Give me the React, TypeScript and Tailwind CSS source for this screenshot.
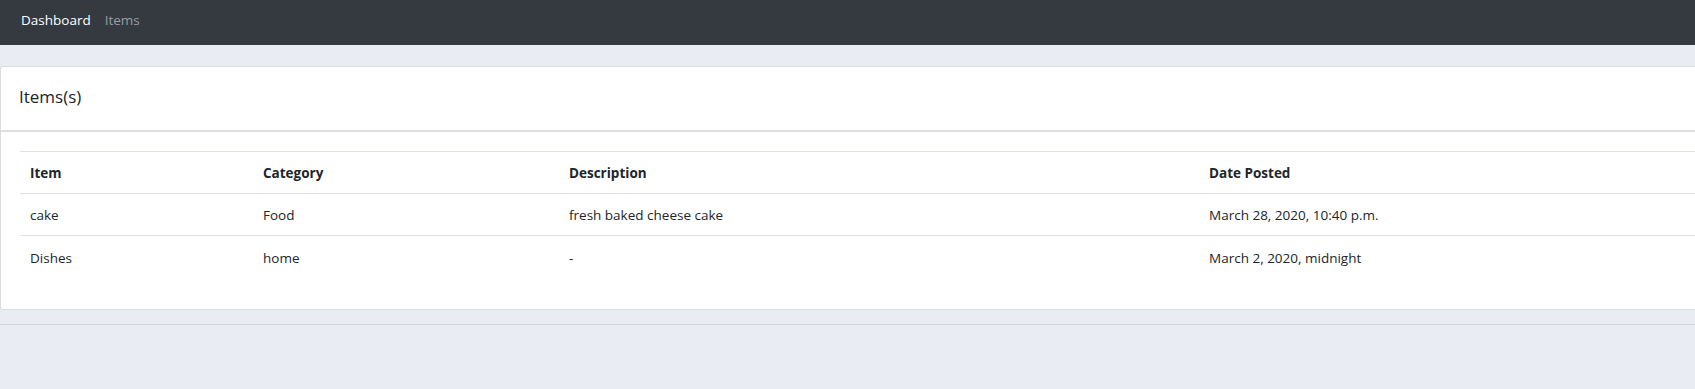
import React from "react";

const rows = [
  { item: "cake", category: "Food", description: "fresh baked cheese cake", date: "March 28, 2020, 10:40 p.m." },
  { item: "Dishes", category: "home", description: "-", date: "March 2, 2020, midnight" },
];

export default function App() {
  return (
    <div
      className="min-h-[389px] w-full overflow-hidden bg-[#e9ecf3] text-[#212529]"
      style={{ fontFamily: '"Open Sans", "Noto Sans", sans-serif' }}
    >
      <nav className="flex h-[45px] items-center gap-[14px] bg-[#343a40] pl-[21px] pb-[5px]">
        <span className="text-[13.5px] text-white">Dashboard</span>
        <span className="text-[13.5px] text-[#9a9da1]">Items</span>
      </nav>
      <div className="pt-[21px]">
        <div className="rounded-l-[3px] border-y border-l border-[#dcdcdc] bg-white">
          <div className="flex h-[65px] items-center border-b-2 border-[#dedede] pl-[18px] pb-[4px]">
            <h1 className="text-[17px] text-[#212529]">Items(s)</h1>
          </div>
          <div className="pl-[19px] pt-[19px] pb-[31px]">
            <table className="w-full table-fixed border-collapse text-[13.5px]">
              <colgroup>
                <col className="w-[233px]" />
                <col className="w-[306px]" />
                <col className="w-[640px]" />
                <col />
              </colgroup>
              <thead>
                <tr className="h-[42px] border-y border-[#dee2e6]">
                  <th className="pl-[10px] pt-[2px] text-left font-bold">Item</th>
                  <th className="pl-[10px] pt-[2px] text-left font-bold">Category</th>
                  <th className="pl-[10px] pt-[2px] text-left font-bold">Description</th>
                  <th className="pl-[10px] pt-[2px] text-left font-bold">Date Posted</th>
                </tr>
              </thead>
              <tbody>
                {rows.map((r, i) => (
                  <tr key={i} className={i === 0 ? "h-[42px] border-b border-[#dee2e6]" : "h-[42px]"}>
                    <td className="pl-[10px] pt-[2px]">{r.item}</td>
                    <td className="pl-[10px] pt-[2px]">{r.category}</td>
                    <td className="pl-[10px] pt-[2px]">{r.description}</td>
                    <td className="pl-[10px] pt-[2px]">{r.date}</td>
                  </tr>
                ))}
              </tbody>
            </table>
          </div>
        </div>
        <div className="mt-[14px] border-t border-[#d6d6d6]" />
      </div>
    </div>
  );
}
